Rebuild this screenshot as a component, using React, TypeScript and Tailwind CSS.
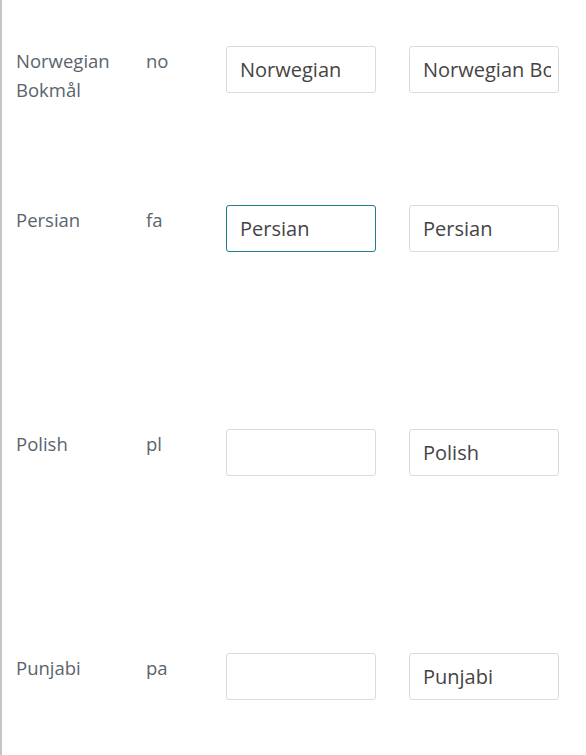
import React from 'react';

type Row = {
    name: string[];
    code: string;
    local: string;
    english: string;
    height: string;
    focused?: boolean;
};

const rows: Row[] = [
    { name: ['Norwegian', 'Bokmål'], code: 'no', local: 'Norwegian', english: 'Norwegian Bokmål', height: 'h-[159px]' },
    { name: ['Persian'], code: 'fa', local: 'Persian', english: 'Persian', height: 'h-[224px]', focused: true },
    { name: ['Polish'], code: 'pl', local: '', english: 'Polish', height: 'h-[224px]' },
    { name: ['Punjabi'], code: 'pa', local: '', english: 'Punjabi', height: 'h-[224px]' },
];

const TextBox: React.FC<{ value: string; focused?: boolean }> = ({ value, focused }) => (
    <input
        readOnly
        defaultValue={value}
        className={`w-[150px] h-[47px] rounded-[3px] bg-white pl-[13px] pr-[7px] text-[20px] text-[#444] outline-none ${
            focused ? 'border border-[#1f7d8d]' : 'border border-[#dadada]'
        }`}
    />
);

const App: React.FC = () => {
    return (
        <div
            className="w-[586px] h-[755px] overflow-hidden bg-white border-l-2 border-[#c6c6c6] pt-[46px]"
            style={{ fontFamily: '"Open Sans", "Noto Sans", sans-serif' }}
        >
            {rows.map(row => (
                <div key={row.code} className={`flex items-start ${row.height}`}>
                    <div className="w-[144px] pl-[14px] text-[18.5px] leading-[29px] text-[#5a646d]">
                        {row.name.map(line => (
                            <div key={line}>{line}</div>
                        ))}
                    </div>
                    <div className="w-[80px] text-[18.5px] leading-[29px] text-[#5a646d]">{row.code}</div>
                    <div className="w-[183px]">
                        <TextBox value={row.local} focused={row.focused} />
                    </div>
                    <TextBox value={row.english} />
                </div>
            ))}
        </div>
    );
};

export default App;
